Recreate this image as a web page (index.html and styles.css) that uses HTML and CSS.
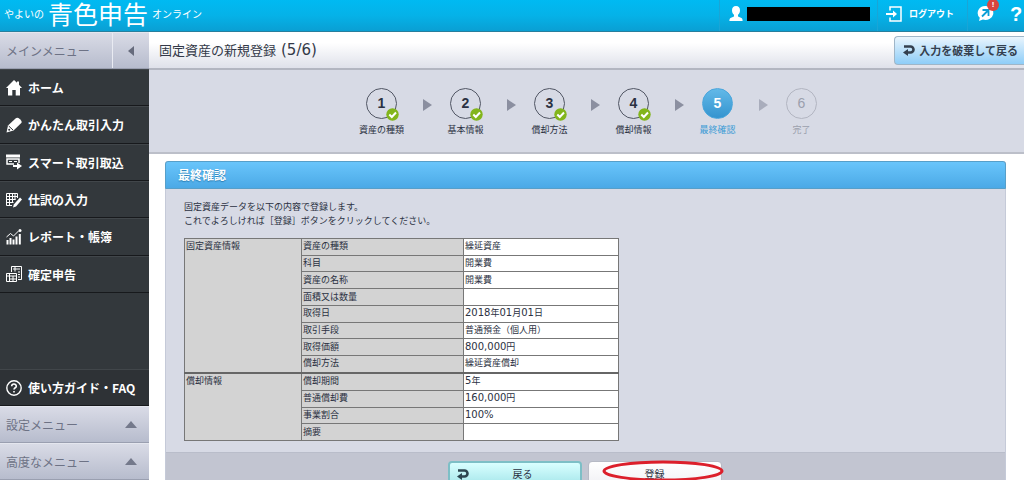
FILE: index.html
```
<!DOCTYPE html>
<html lang="ja">
<head>
<meta charset="utf-8">
<title>固定資産の新規登録</title>
<link rel="stylesheet" href="styles.css">
</head>
<body>
<header class="topbar">
  <div class="logo"><span>やよいの</span><strong>青色申告</strong><span>オンライン</span></div>
  <div class="account">
    <svg width="14" height="16" viewBox="0 0 14 16" fill="#fff"><path d="M7 0C4.300 0 3 1.700 3 4.200c0 1.900.8 3.700 2 4.600v1.700L1.500 12C.6 12.500.4 13.500.4 15h13.200c0-1.500-.2-2.500-1.100-3L9 10.500V8.800c1.200-.9 2-2.700 2-4.600C11 1.700 9.700 0 7 0z"/></svg>
    <span class="account-name"></span>
  </div>
  <a class="logout" href="#">
    <svg width="16" height="16" viewBox="0 0 16 16" fill="none" stroke="#fff"><path d="M4 4.500V1h11v14H4v-3.500" stroke-width="1.500"/><path d="M0 8h8" stroke-width="2"/><path d="M7 4.500L11 8l-4 3.500z" fill="#fff" stroke="none"/></svg>
    <span>ログアウト</span>
  </a>
  <div class="tools">
    <a class="notice" href="#" aria-label="お知らせ">
      <svg width="17" height="17" viewBox="0 0 17 17"><path d="M8.500 1a7.800 7 0 1 1-2.600 13.600L2 16l.8-3.200A7.500 7 0 0 1 8.500 1z" fill="#fff"/><path d="M5 11.500l5.500-5.500M5.500 5h6v6" fill="none" stroke="#0a9fd6" stroke-width="1.800"/></svg>
      <span class="badge">!</span>
    </a>
    <a class="help" href="#" aria-label="ヘルプ">?</a>
  </div>
</header>
<div class="shell">
  <nav class="sidebar">
    <div class="side-head"><span>メインメニュー</span><button class="collapse" aria-label="閉じる"><svg width="6" height="10" viewBox="0 0 6 10"><path d="M6 0v10L0 5z" fill="#666b7c"/></svg></button></div>
    <ul class="menu">
      <li><a href="#"><svg width="16" height="16" viewBox="0 0 16 16" fill="#fff"><path d="M8 0l3 2.800V1.500h2v3.200L16 8h-2v7.500H9.700V10H6.300v5.500H2V8H0z"/></svg>ホーム</a></li>
      <li><a href="#"><svg width="16" height="16" viewBox="0 0 16 16"><path d="M9.800 1.200Q11.500 0 14 2.200T15.300 6L7.500 13.500.5 15.500 2 8.500z" fill="#fff"/><path d="M2.700 9l4.300 4" stroke="#2f3438"/><circle cx="3.200" cy="12.800" r="1" fill="#2f3438"/></svg>かんたん取引入力</a></li>
      <li><a href="#"><svg width="16" height="16" viewBox="0 0 16 16" fill="none" stroke="#fff"><path d="M0 2h14" stroke-width="3"/><path d="M8 10H1V5h12v4" stroke-width="1.500"/><path d="M3 7.500h3M8 7.500h3" stroke-width="1.200"/><path d="M7 12h5" stroke-width="2"/><path d="M11 8.500l5 3.500-5 3.500z" fill="#fff" stroke="none"/></svg>スマート取引取込</a></li>
      <li><a href="#"><svg width="16" height="16" viewBox="0 0 16 16" fill="none" stroke="#fff"><path d="M.5 1.500h11V6M.5 1.500v12H6M.5 4.500h11M.5 7.500h9M.5 10.500h7M3.500 1.500v12M6.500 1.500V11M9 1.500V8"/><path d="M14 5.500l2 2-6 7-3 1 .8-3z" fill="#fff" stroke="none"/></svg>仕訳の入力</a></li>
      <li><a href="#"><svg width="16" height="16" viewBox="0 0 16 16" fill="none" stroke="#fff"><path d="M1.500 15.500V11M4.500 15.500V9M7.500 15.500v-5M10.500 15.500V7.500M13.800 15.500V5" stroke-width="2"/><path d="M.5 8l4-3.500L7.500 7l5-5"/><circle cx="14" cy="1.500" r="1.500" fill="#fff" stroke="none"/></svg>レポート・帳簿</a></li>
      <li><a href="#"><svg width="16" height="16" viewBox="0 0 16 16" fill="none" stroke="#fff"><path d="M5.500 6V.5h10v13H12M7 3h7M12 6h2M12 8.500h2M12 11h2M9 .5v5"/><path d="M.5 7.500h10v8H.5zM.5 10h10M3.500 7.500v8M7 10v5.500M3.500 13h7"/></svg>確定申告</a></li>
    </ul>
    <a class="guide" href="#"><svg width="16" height="16" viewBox="0 0 16 16" fill="none" stroke="#fff" stroke-width="1.400"><circle cx="8" cy="8" r="7.200"/><path d="M5.700 6.300c0-3 4.600-3 4.600-.1C10.300 7.800 8 7.700 8 9.600M8 11v1.500" stroke-width="1.600"/></svg>使い方ガイド・FAQ</a>
    <button class="fold">設定メニュー<svg width="12" height="7" viewBox="0 0 12 7"><path d="M6 0l6 7H0z" fill="#74798b"/></svg></button>
    <button class="fold">高度なメニュー<svg width="12" height="7" viewBox="0 0 12 7"><path d="M6 0l6 7H0z" fill="#74798b"/></svg></button>
  </nav>
  <main class="main">
    <div class="titlebar">
      <h1>固定資産の新規登録 <span>(5/6)</span></h1>
      <button class="discard"><svg width="12" height="11" viewBox="0 0 12 11"><path d="M1 1.500h6.500a3 3 0 0 1 0 6H4" fill="none" stroke="#34404f" stroke-width="2.600"/><path d="M5 4v7L0 7.500z" fill="#34404f"/></svg>入力を破棄して戻る</button>
    </div>
    <ol class="steps">
      <li class="done"><span class="circle">1<svg class="check" viewBox="0 0 13 13"><circle cx="6.500" cy="6.500" r="6.200"/><path d="M3.300 6.500l2.500 2.500 4.200-4.500"/></svg></span><span class="label">資産の種類</span></li>
      <li class="done"><span class="circle">2<svg class="check" viewBox="0 0 13 13"><circle cx="6.500" cy="6.500" r="6.200"/><path d="M3.300 6.500l2.500 2.500 4.200-4.500"/></svg></span><span class="label">基本情報</span></li>
      <li class="done"><span class="circle">3<svg class="check" viewBox="0 0 13 13"><circle cx="6.500" cy="6.500" r="6.200"/><path d="M3.300 6.500l2.500 2.500 4.200-4.500"/></svg></span><span class="label">償却方法</span></li>
      <li class="done"><span class="circle">4<svg class="check" viewBox="0 0 13 13"><circle cx="6.500" cy="6.500" r="6.200"/><path d="M3.300 6.500l2.500 2.500 4.200-4.500"/></svg></span><span class="label">償却情報</span></li>
      <li class="current"><span class="circle">5</span><span class="label">最終確認</span></li>
      <li class="next"><span class="circle">6</span><span class="label">完了</span></li>
    </ol>
    <section class="panel">
      <h2>最終確認</h2>
      <div class="panel-body">
        <p>固定資産データを以下の内容で登録します。<br>これでよろしければ［登録］ボタンをクリックしてください。</p>
        <table class="summary">
          <tbody>
            <tr><th class="group" scope="rowgroup" rowspan="8">固定資産情報</th><th scope="row">資産の種類</th><td>繰延資産</td></tr>
            <tr><th scope="row">科目</th><td>開業費</td></tr>
            <tr><th scope="row">資産の名称</th><td>開業費</td></tr>
            <tr><th scope="row">面積又は数量</th><td></td></tr>
            <tr><th scope="row">取得日</th><td><b>2018</b>年<b>01</b>月<b>01</b>日</td></tr>
            <tr><th scope="row">取引手段</th><td>普通預金（個人用）</td></tr>
            <tr><th scope="row">取得価額</th><td><b>800,000</b>円</td></tr>
            <tr><th scope="row">償却方法</th><td>繰延資産償却</td></tr>
          </tbody>
          <tbody>
            <tr><th class="group" scope="rowgroup" rowspan="4">償却情報</th><th scope="row">償却期間</th><td><b>5</b>年</td></tr>
            <tr><th scope="row">普通償却費</th><td><b>160,000</b>円</td></tr>
            <tr><th scope="row">事業割合</th><td><b>100%</b></td></tr>
            <tr><th scope="row">摘要</th><td></td></tr>
          </tbody>
        </table>
      </div>
      <div class="actions">
        <button class="back"><svg width="12" height="11" viewBox="0 0 12 11"><path d="M1 1.500h6.500a3 3 0 0 1 0 6H4" fill="none" stroke="#2c4550" stroke-width="2.600"/><path d="M5 4v7L0 7.500z" fill="#2c4550"/></svg>戻る</button>
        <button class="submit">登録<svg class="mark" viewBox="0 0 122 22"><ellipse cx="61" cy="11" rx="59" ry="9"/></svg></button>
      </div>
    </section>
  </main>
</div>
</body>
</html>
```
FILE: styles.css
```
* { box-sizing: border-box; }

body {
  margin: 0;
  height: 100vh;
  display: flex;
  flex-direction: column;
  overflow: hidden;
  font-family: "Noto Sans CJK JP", sans-serif;
  font-size: 9px;
  color: #2b3142;
  background: #fff;
}

button { font: inherit; color: inherit; cursor: pointer; }
a { color: inherit; text-decoration: none; }
ul, ol { list-style: none; margin: 0; padding: 0; }
svg { flex: none; display: block; }

/* Top bar */
.topbar {
  flex: none;
  height: 32px;
  display: flex;
  align-items: stretch;
  color: #fff;
  background: linear-gradient(#00baf2, #05b2e8 50%, #0a9fd3);
  border-bottom: 1px solid #287f9d;
}
.logo {
  flex: 1;
  display: flex;
  align-items: center;
  gap: 4px;
  padding: 0 0 4px 4px;
  font-size: 10px;
  line-height: 27px;
  white-space: nowrap;
}
.logo strong { font-size: 25px; font-weight: 400; }
.account, .logout, .tools {
  display: flex;
  align-items: center;
  padding-bottom: 4px;
  border-left: 1px solid #1aa5d6;
}
.account { gap: 4px; padding-left: 9px; padding-right: 7px; }
.account-name { width: 123px; height: 14px; background: #000; }
.logout { gap: 7px; padding-left: 8px; padding-right: 13px; font-weight: 700; white-space: nowrap; }
.tools { padding-left: 9px; gap: 16px; }
.notice { position: relative; }
.badge {
  position: absolute;
  top: -6px;
  right: -5px;
  width: 12px;
  height: 12px;
  border-radius: 50%;
  background: #d9453f;
  font: 700 8px/12px "Liberation Sans", sans-serif;
  text-align: center;
}
.help { width: 14px; font: 700 20px/20px "Liberation Sans", sans-serif; }

.shell { flex: 1; min-height: 0; display: flex; }

/* Sidebar */
.sidebar {
  flex: none;
  width: 149px;
  display: flex;
  flex-direction: column;
  background: #33383c;
  color: #fff;
  font-size: 12px;
}
.side-head, .fold {
  flex: none;
  height: 37px;
  display: flex;
  align-items: center;
  justify-content: space-between;
  color: #6d7285;
  background: linear-gradient(#d9dbe6, #b7bccd);
  border: 0;
  border-top: 1px solid #e4e6ee;
  border-bottom: 1px solid #9a9fb0;
  padding: 0 12px 0 6px;
}
.side-head { padding-right: 0; }
.collapse {
  align-self: stretch;
  width: 37px;
  display: flex;
  align-items: center;
  justify-content: center;
  padding: 0;
  border: 0;
  border-left: 1px solid #e9ebf2;
  background: none;
}
.menu { flex: none; height: 224px; display: grid; grid-auto-rows: 1fr; }
.menu a, .guide {
  height: 100%;
  display: flex;
  align-items: center;
  gap: 6px;
  padding-left: 6px;
  font-weight: 700;
  white-space: nowrap;
  border-top: 1px solid #41464a;
  border-bottom: 1px solid #17191c;
}
.guide { flex: none; height: 37px; margin-top: auto; background: #2e3236; }

/* Main column */
.main { flex: 1; min-width: 0; overflow: hidden; }
.titlebar {
  height: 38px;
  display: flex;
  align-items: center;
  justify-content: space-between;
  padding-left: 10px;
  background: linear-gradient(#fff 30%, #dfe1ea);
  border-bottom: 2px solid #b3b6c1;
}
h1 {
  display: flex;
  align-items: baseline;
  gap: 5px;
  margin: 0;
  font-size: 13px;
  font-weight: 400;
  line-height: 20px;
  color: #333948;
}
h1 span { font-family: "DejaVu Sans", sans-serif; font-size: 15px; }
.discard {
  height: 29px;
  display: flex;
  align-items: center;
  gap: 4px;
  padding: 0 6px 0 8px;
  font-size: 11px;
  font-weight: 700;
  white-space: nowrap;
  color: #34404f;
  background: linear-gradient(#e9f5fd, #8ecdf8);
  border: 1px solid #9fb6c8;
  border-right: 0;
  border-radius: 4px 0 0 4px;
}

/* Wizard steps */
.steps {
  display: flex;
  justify-content: center;
  gap: 34px;
  height: 84px;
  padding: 18px 0 0 10px;
  background: #d7dae5;
  border-bottom: 2px solid #bcbfc9;
}
.steps li {
  position: relative;
  width: 50px;
  display: flex;
  flex-direction: column;
  align-items: center;
  gap: 4px;
}
.steps li:not(:last-child)::after {
  content: "";
  position: absolute;
  left: 66px;
  top: 11px;
  border-left: 9px solid #8b8fa0;
  border-top: 6px solid transparent;
  border-bottom: 6px solid transparent;
}
.steps .current::after { opacity: 0.6; }
.circle {
  position: relative;
  width: 31px;
  height: 31px;
  border: 1px solid #515664;
  border-radius: 50%;
  font: 700 14px/29px "Liberation Sans", sans-serif;
  text-align: center;
}
.label { line-height: 14px; white-space: nowrap; }
.check { position: absolute; right: -3px; bottom: -3px; width: 13px; height: 13px; }
.check circle { fill: #82b51c; }
.check path { fill: none; stroke: #fff; stroke-width: 2; }
.current { color: #3a9ad5; }
.current .circle { color: #fff; border-color: #4ba6dc; background: linear-gradient(#62b9e8, #3594cf); }
.next { color: #9b9fad; }
.next .circle { border-color: #b2b5c1; font-weight: 400; }

/* Confirmation panel */
.panel {
  margin: 7px 18px 0 16px;
  background: #d7dae5;
  border-left: 1px solid #c5cad8;
  border-right: 1px solid #c5cad8;
  border-radius: 3px 3px 0 0;
}
h2 {
  margin: 0 -1px;
  height: 28px;
  padding-left: 12px;
  font-size: 12px;
  line-height: 26px;
  color: #fff;
  text-shadow: 0 1px 1px #2c7fb5;
  background: linear-gradient(#69c5fb, #4ba9e6);
  border: 1px solid #579fc9;
  border-radius: 3px 3px 0 0;
}
.panel-body { padding: 11px 18px 11px; }
p { margin: 0 0 10px; line-height: 14px; }
.summary {
  width: 435px;
  max-width: 100%;
  height: 203px;
  table-layout: fixed;
  border-collapse: collapse;
  line-height: 12px;
}
.summary th, .summary td {
  padding: 0 1px 1px;
  border: 1px solid #777;
  text-align: left;
  font-weight: 400;
  background: #fff;
  white-space: nowrap;
}
.summary th { width: 162px; background: #d3d3d3; }
.summary .group { width: 117px; vertical-align: top; padding-top: 1px; }
.summary tbody + tbody { border-top: 2px solid #666; }
.summary b { font: 10px/12px "DejaVu Sans", sans-serif; }
.actions {
  display: flex;
  justify-content: center;
  gap: 6px;
  padding: 8px 2px 12px 0;
  background: #c2c5d1;
  border-top: 1px solid #b9bdca;
}
.actions button {
  position: relative;
  width: 134px;
  height: 26px;
  padding: 0 8px;
  display: flex;
  align-items: center;
  justify-content: center;
  font-size: 10px;
  line-height: 12px;
  border: 1px solid #b7bac5;
  border-radius: 4px;
  background: linear-gradient(#fff, #f0f0f4);
}
.actions .back { border: 2px solid #7dbfc6; padding-left: 24px; background: linear-gradient(#d9ffff, #a5e6ea); }
.back svg { position: absolute; left: 7px; top: 6px; }
.mark { position: absolute; left: 13px; top: -2px; width: 122px; height: 22px; pointer-events: none; }
.mark ellipse { fill: none; stroke: #dc1f2b; stroke-width: 3; }
```
